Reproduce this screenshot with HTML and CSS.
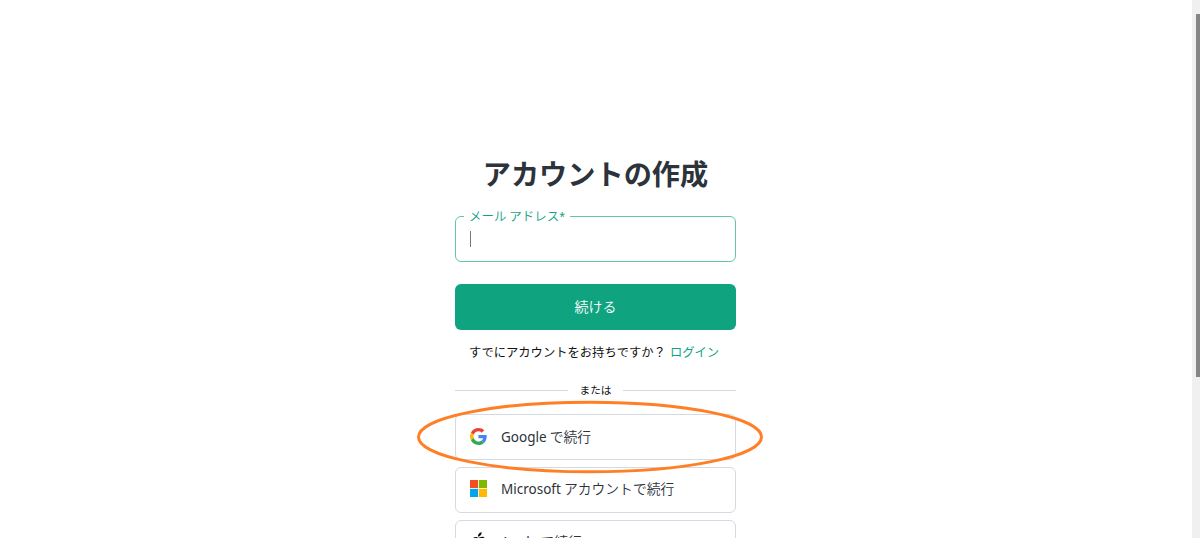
FILE: index.html
```html
<!DOCTYPE html>
<html lang="ja">
<head>
    <meta charset="UTF-8">
    <meta name="viewport" content="width=device-width, initial-scale=1.0">
    <title>アカウントの作成</title>
    <link rel="stylesheet" href="styles.css">
</head>
<body>
    <main>
        <h1>アカウントの作成</h1>

        <form>
            <fieldset class="email-field">
                <legend>メール アドレス<span>*</span></legend>
                <div class="cursor"></div>
            </fieldset>
            <button type="button" class="continue-button">続ける</button>
        </form>

        <p class="login"><span>すでにアカウントをお持ちですか？</span><a href="#">ログイン</a></p>

        <div class="divider"><span>または</span></div>

        <div class="providers">
            <button type="button" class="provider">
                <svg width="17" height="17" viewBox="0 0 48 48">
                    <path fill="#EA4335" d="M24 9.5c3.54 0 6.71 1.22 9.21 3.6l6.85-6.85C35.9 2.38 30.47 0 24 0 14.62 0 6.51 5.38 2.56 13.22l7.98 6.19C12.43 13.72 17.74 9.5 24 9.5z"/>
                    <path fill="#4285F4" d="M46.98 24.55c0-1.57-.15-3.09-.38-4.55H24v9.02h12.94c-.58 2.96-2.26 5.48-4.78 7.18l7.73 6c4.51-4.18 7.09-10.36 7.09-17.65z"/>
                    <path fill="#FBBC05" d="M10.53 28.59c-.48-1.45-.76-2.99-.76-4.59s.27-3.14.76-4.59l-7.98-6.19C.92 16.46 0 20.12 0 24c0 3.88.92 7.54 2.56 10.78l7.97-6.19z"/>
                    <path fill="#34A853" d="M24 48c6.48 0 11.93-2.13 15.89-5.81l-7.73-6c-2.15 1.45-4.92 2.3-8.16 2.3-6.26 0-11.57-4.22-13.47-9.91l-7.98 6.19C6.51 42.62 14.62 48 24 48z"/>
                </svg>
                <span><span class="name">Google</span> で続行</span>
            </button>
            <button type="button" class="provider">
                <svg width="17" height="17" viewBox="0 0 21 21">
                    <path fill="#f25022" d="M0 0h10v10H0z"/>
                    <path fill="#7fba00" d="M11 0h10v10H11z"/>
                    <path fill="#00a4ef" d="M0 11h10v10H0z"/>
                    <path fill="#ffb900" d="M11 11h10v10H11z"/>
                </svg>
                <span><span class="name">Microsoft</span> アカウントで続行</span>
            </button>
            <button type="button" class="provider">
                <svg width="17" height="19" viewBox="0 0 24 26">
                    <path fill="#111" d="M16.4 0c.2 1.7-.5 3.2-1.4 4.2-1 1.1-2.4 1.9-3.8 1.8-.2-1.6.6-3.2 1.4-4.1C13.6.8 15.2 0 16.4 0zM21 8.3c-2 1.2-2.9 2.8-2.9 4.7 0 2.3 1.4 4.2 3.6 5-1 2.7-3 6-5.2 6-1.6 0-2.1-1-4-1s-2.5 1-4 1C5.5 24 2 18.3 2 13.8 2 9.5 4.8 6.500 8.200 6.500c1.700 0 3.200 1.100 4.200 1.100 1 0 2.700-1.200 4.700-1.200 1.500 0 3 .7 3.900 1.900z"/>
                </svg>
                <span><span class="name">Apple</span> で続行</span>
            </button>
            <svg class="highlight" width="348" height="74" viewBox="0 0 348 74">
                <ellipse cx="174" cy="37" rx="171.5" ry="34.8" fill="none" stroke="#ff7f27" stroke-width="3"/>
            </svg>
        </div>
    </main>

    <div class="scrollbar"><div class="thumb"></div></div>
</body>
</html>
```

FILE: styles.css
```css
body {
    margin: 0;
    height: 538px;
    overflow: hidden;
    display: flex;
    justify-content: space-between;
    background-color: #fff;
    color: #2d333a;
    font-family: "Noto Sans CJK JP", sans-serif;
}

main {
    box-sizing: border-box;
    width: 281px;
    height: 538px;
    margin-left: 455px;
    padding-top: 152px;
    font-weight: 350;
}

h1 {
    margin: 0 -20px;
    font-size: 28.2px;
    line-height: 42px;
    font-weight: bold;
    text-align: center;
}

.email-field {
    box-sizing: border-box;
    height: 55px;
    margin: 13px 0 0;
    padding: 0 14px;
    border: 1px solid #65c4ac;
    border-radius: 6px;
}

.email-field legend {
    height: 18px;
    margin-left: -6px;
    padding: 0 5px;
    color: #10a37f;
    font-size: 12.5px;
    line-height: 17px;
}

.email-field legend span {
    font-family: "Noto Sans", sans-serif;
    font-size: 10.5px;
    font-weight: 400;
    vertical-align: 1px;
    line-height: 1;
}

.cursor {
    width: 1px;
    height: 16px;
    margin-top: 6px;
    background-color: #777;
}

button {
    box-sizing: border-box;
    width: 100%;
    height: 46px;
    border-radius: 6px;
    font-family: inherit;
    font-size: 14px;
    font-weight: inherit;
}

.continue-button {
    display: block;
    margin-top: 22px;
    padding: 0 0 3px;
    border: none;
    background-color: #10a37f;
    color: #fff;
}

.login {
    display: flex;
    gap: 4px;
    margin: 12px 0 0 14px;
    color: #111;
    font-size: 12.3px;
    font-weight: 400;
    line-height: 20px;
    white-space: nowrap;
}

.login a {
    color: #10a37f;
    text-decoration: none;
}

.divider {
    display: flex;
    align-items: center;
    gap: 11px;
    margin-top: 20px;
    color: #111;
    font-size: 10.7px;
    font-weight: 400;
    line-height: 16px;
}

.divider::before,
.divider::after {
    content: "";
    flex: 1;
    height: 1px;
    background-color: #d5d8dd;
}

.providers {
    position: relative;
    display: flex;
    flex-direction: column;
    gap: 7px;
    margin-top: 16px;
}

.provider {
    display: flex;
    flex-shrink: 0;
    align-items: center;
    gap: 14px;
    padding: 0 0 2px 14px;
    border: 1px solid #d5d9e0;
    background-color: #fff;
    color: #2d333a;
    font-size: 13.8px;
    text-align: left;
}

.provider + .provider {
    padding-bottom: 4px;
}

.name {
    font-family: "Noto Sans", sans-serif;
    font-size: 13.5px;
    font-weight: 400;
}

/* orange ring around the Google button */
.highlight {
    position: absolute;
    left: -39px;
    top: -14px;
}

.scrollbar {
    width: 8px;
    height: 538px;
    box-sizing: border-box;
    padding: 14px 0 0 4px;
    background-color: #f0f0f0;
}

.thumb {
    height: 363px;
    background-color: #858585;
}
```
